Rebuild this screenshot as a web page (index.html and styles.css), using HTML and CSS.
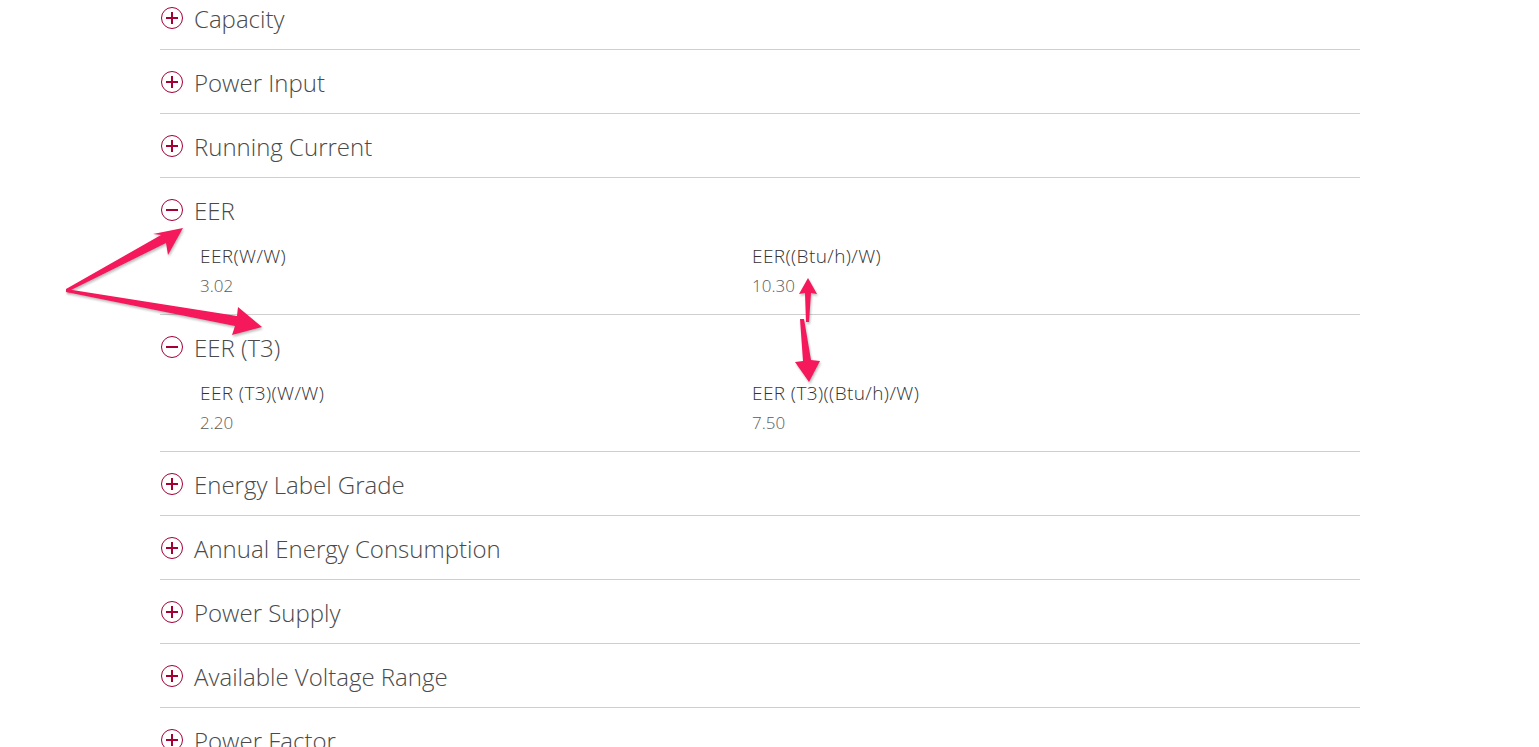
FILE: index.html
```html
<!DOCTYPE html>
<html>
<head>
    <title>Specifications</title>
    <link rel="stylesheet" href="styles.css">
</head>
<body>
    <div class="specs">
        <div class="spec">
            <div class="spec-head"><span class="ico plus"></span>Capacity</div>
        </div>
        <div class="spec">
            <div class="spec-head"><span class="ico plus"></span>Power Input</div>
        </div>
        <div class="spec">
            <div class="spec-head"><span class="ico plus"></span>Running Current</div>
        </div>
        <div class="spec open">
            <div class="spec-head"><span class="ico minus"></span>EER</div>
            <div class="spec-body">
                <div class="item">
                    <div class="item-name">EER(W/W)</div>
                    <div class="item-value">3.02</div>
                </div>
                <div class="item">
                    <div class="item-name">EER((Btu/h)/W)</div>
                    <div class="item-value">10.30</div>
                </div>
            </div>
        </div>
        <div class="spec open">
            <div class="spec-head"><span class="ico minus"></span>EER (T3)</div>
            <div class="spec-body">
                <div class="item">
                    <div class="item-name">EER (T3)(W/W)</div>
                    <div class="item-value">2.20</div>
                </div>
                <div class="item">
                    <div class="item-name">EER (T3)((Btu/h)/W)</div>
                    <div class="item-value">7.50</div>
                </div>
            </div>
        </div>
        <div class="spec">
            <div class="spec-head"><span class="ico plus"></span>Energy Label Grade</div>
        </div>
        <div class="spec">
            <div class="spec-head"><span class="ico plus"></span>Annual Energy Consumption</div>
        </div>
        <div class="spec">
            <div class="spec-head"><span class="ico plus"></span>Power Supply</div>
        </div>
        <div class="spec">
            <div class="spec-head"><span class="ico plus"></span>Available Voltage Range</div>
        </div>
        <div class="spec">
            <div class="spec-head"><span class="ico plus"></span>Power Factor</div>
        </div>
    </div>

    <!-- annotation arrows drawn over the page -->
    <svg class="arrows" width="1539" height="747" viewBox="0 0 1539 747">
        <polygon points="66,289 161,235 153,234 183,228 168,255 166,243 67,292" />
        <polygon points="66,289 237,316 238,307 262,327 232,335 235,326 66,292" />
        <polygon points="806,322 805,293 799,294 808,278 817,294 811,293 809,322" />
        <polygon points="800,319 803,361 795,362 809,382 820,361 811,360 804,319" />
    </svg>
</body>
</html>
```

FILE: styles.css
```css
body {
    margin: 0;
    padding: 0;
    background: #fff;
    font-family: "Open Sans", Arial, sans-serif;
    color: #333;
    overflow: hidden;
    height: 747px;
}
.specs {
    width: 1200px;
    margin: -14px 0 0 160px;
}
.spec {
    border-bottom: 1px solid #cfcfcf;
}
.spec-head {
    display: flex;
    align-items: center;
    box-sizing: border-box;
    height: 63px;
    padding-top: 1px;
    font-size: 24px;
    font-weight: 300;
    color: #4a4a4a;
    white-space: nowrap;
}
.ico {
    position: relative;
    width: 20px;
    height: 20px;
    border: 1.5px solid #a50034;
    border-radius: 50%;
    margin: 0 11px 0 1px;
    flex-shrink: 0;
}
.ico::before,
.ico::after {
    content: "";
    position: absolute;
    background: #a50034;
    left: 4px;
    top: 9px;
    width: 12px;
    height: 2px;
}
.plus::after {
    left: 9px;
    top: 4px;
    width: 2px;
    height: 12px;
}
.minus::after {
    display: none;
}
.spec-body {
    display: grid;
    grid-template-columns: 552px 1fr;
    padding: 3px 0 16px 40px;
}
.item-name {
    font-size: 19px;
    font-weight: 300;
    letter-spacing: 0.4px;
    color: #333;
    line-height: 24px;
}
.item-value {
    font-size: 17px;
    font-weight: 300;
    color: #5a5a5a;
    line-height: 24px;
    margin-top: 6px;
}
.arrows {
    position: absolute;
    left: 0;
    top: 0;
    pointer-events: none;
}
.arrows polygon {
    fill: #f5185a;
    filter: drop-shadow(1px 2px 1px rgba(0, 0, 0, 0.25));
}
```
